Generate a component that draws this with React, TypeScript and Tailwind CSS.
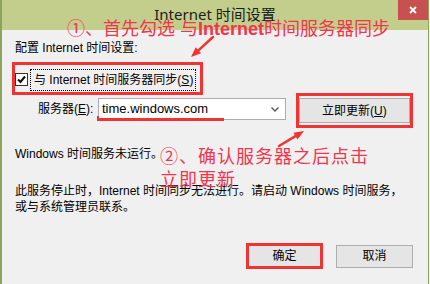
export default function App() {
  const red = "#f03434";

  return (
    <div className="relative w-[430px] h-[284px] overflow-hidden bg-[#f0f0f0] text-[12px] text-black font-['Liberation_Sans','Noto_Sans_CJK_SC',sans-serif]">
      <div className="flex flex-col w-[429px] h-full border-l-2 border-r border-[#8fa35d]">
        {/* Title bar */}
        <div className="relative h-[30px] bg-[#c3ce8c] pt-[5px] text-center text-[15px] leading-[18px] text-[#1c1c1c] font-['Noto_Sans','Noto_Sans_CJK_SC',sans-serif]">
          Internet 时间设置
          <div className="absolute top-0 right-0 flex items-center justify-center w-[30px] h-[20px] bg-[#c75050]">
            <svg width="8" height="8" viewBox="0 0 8 8">
              <path d="M1 1L7 7M7 1L1 7" stroke="#fff" strokeWidth="1.8" />
            </svg>
          </div>
        </div>

        {/* Body */}
        <div className="flex-1 pl-[10px] pr-[15px] pt-[10px]">
          <p className="ml-[3px] leading-[17px]">配置 Internet 时间设置:</p>

          <div className="mt-[5px] flex items-center w-[191px] h-[33px] pt-[2px] border-[3px] border-[#f03434]">
            <div className="flex items-center justify-center w-[13px] h-[13px] border border-[#333] bg-white">
              <svg width="11" height="11" viewBox="0 0 11 11">
                <path d="M2 5.5L4.5 8L9 2.5" fill="none" stroke="#111" strokeWidth="2" />
              </svg>
            </div>
            <div className="ml-[2px] flex items-center w-[166px] h-[22px] pl-[3px] border border-dotted border-black whitespace-nowrap">
              与 Internet 时间服务器同步(<span className="underline">S</span>)
            </div>
          </div>

          <div className="relative mt-[-2px] flex items-start h-[35px]">
            <span className="ml-[26px] mt-[5px] w-[61px] leading-[22px] whitespace-nowrap">
              服务器(<span className="underline">E</span>):
            </span>
            <div className="relative mt-[5px] flex items-center justify-between w-[191px] h-[22px] pl-[3px] pr-[6px] bg-white border border-[#abadb3] text-[13px]">
              <span>time.windows.com</span>
              <svg width="8" height="5" viewBox="0 0 8 5">
                <path d="M0.5 0.5L4 4L7.5 0.5" fill="none" stroke="#555" strokeWidth="1.3" />
              </svg>
              <div className="absolute left-[-2px] bottom-[-2px] w-[127px] h-[5px] border-l-2 border-b-[3px] border-[#f03434]" />
            </div>
            <div className="ml-[10px] flex items-center justify-center w-[119px] h-[35px] border-[3px] border-[#f03434]">
              <div className="flex items-center justify-center w-[111px] h-[25px] bg-[#e5e5e5] border border-[#adadad]">
                立即更新(<span className="underline">U</span>)
              </div>
            </div>
          </div>

          <p className="ml-[3px] mt-[18px] leading-[17px]">Windows 时间服务未运行。</p>

          <p className="ml-[3px] mt-[20px] leading-[16px]">
            此服务停止时，Internet 时间同步无法进行。请启动 Windows 时间服务，
            <br />
            或与系统管理员联系。
          </p>

          <div className="mt-[28px] flex items-center justify-end gap-[13px]">
            <div className="flex items-center justify-center w-[77px] h-[26px] border-[3px] border-[#f03434]">
              <div className="flex items-center justify-center w-[71px] h-[20px] bg-[#e5e5e5]">确定</div>
            </div>
            <div className="flex items-center justify-center w-[77px] h-[23px] bg-[#e5e5e5] border border-[#adadad]">
              取消
            </div>
          </div>
        </div>
      </div>

      {/* Annotations */}
      <div className="absolute left-[67px] top-[17px] text-[18px] leading-[24px] text-[#f2344f] whitespace-nowrap">
        ①、首先勾选 与<span className="font-bold">Internet</span>时间服务器同步
      </div>
      <div className="absolute left-[160px] top-[146px] text-[18px] leading-[23px] tracking-[1px] text-[#f2344f] whitespace-nowrap">
        ②、确认服务器之后点击
        <br />
        立即更新
      </div>

      <svg className="absolute left-0 top-0 pointer-events-none" width="430" height="284" viewBox="0 0 430 284">
        <line x1="213" y1="37" x2="198.4" y2="50.3" stroke={red} strokeWidth="2.5" strokeLinecap="round" />
        <polygon points="191,57 201.1,53.3 195.7,47.3" fill={red} />
        <line x1="279" y1="146" x2="295.4" y2="136.1" stroke={red} strokeWidth="2.5" strokeLinecap="round" />
        <polygon points="304,131 297.5,139.5 293.4,132.7" fill={red} />
      </svg>
    </div>
  );
}
